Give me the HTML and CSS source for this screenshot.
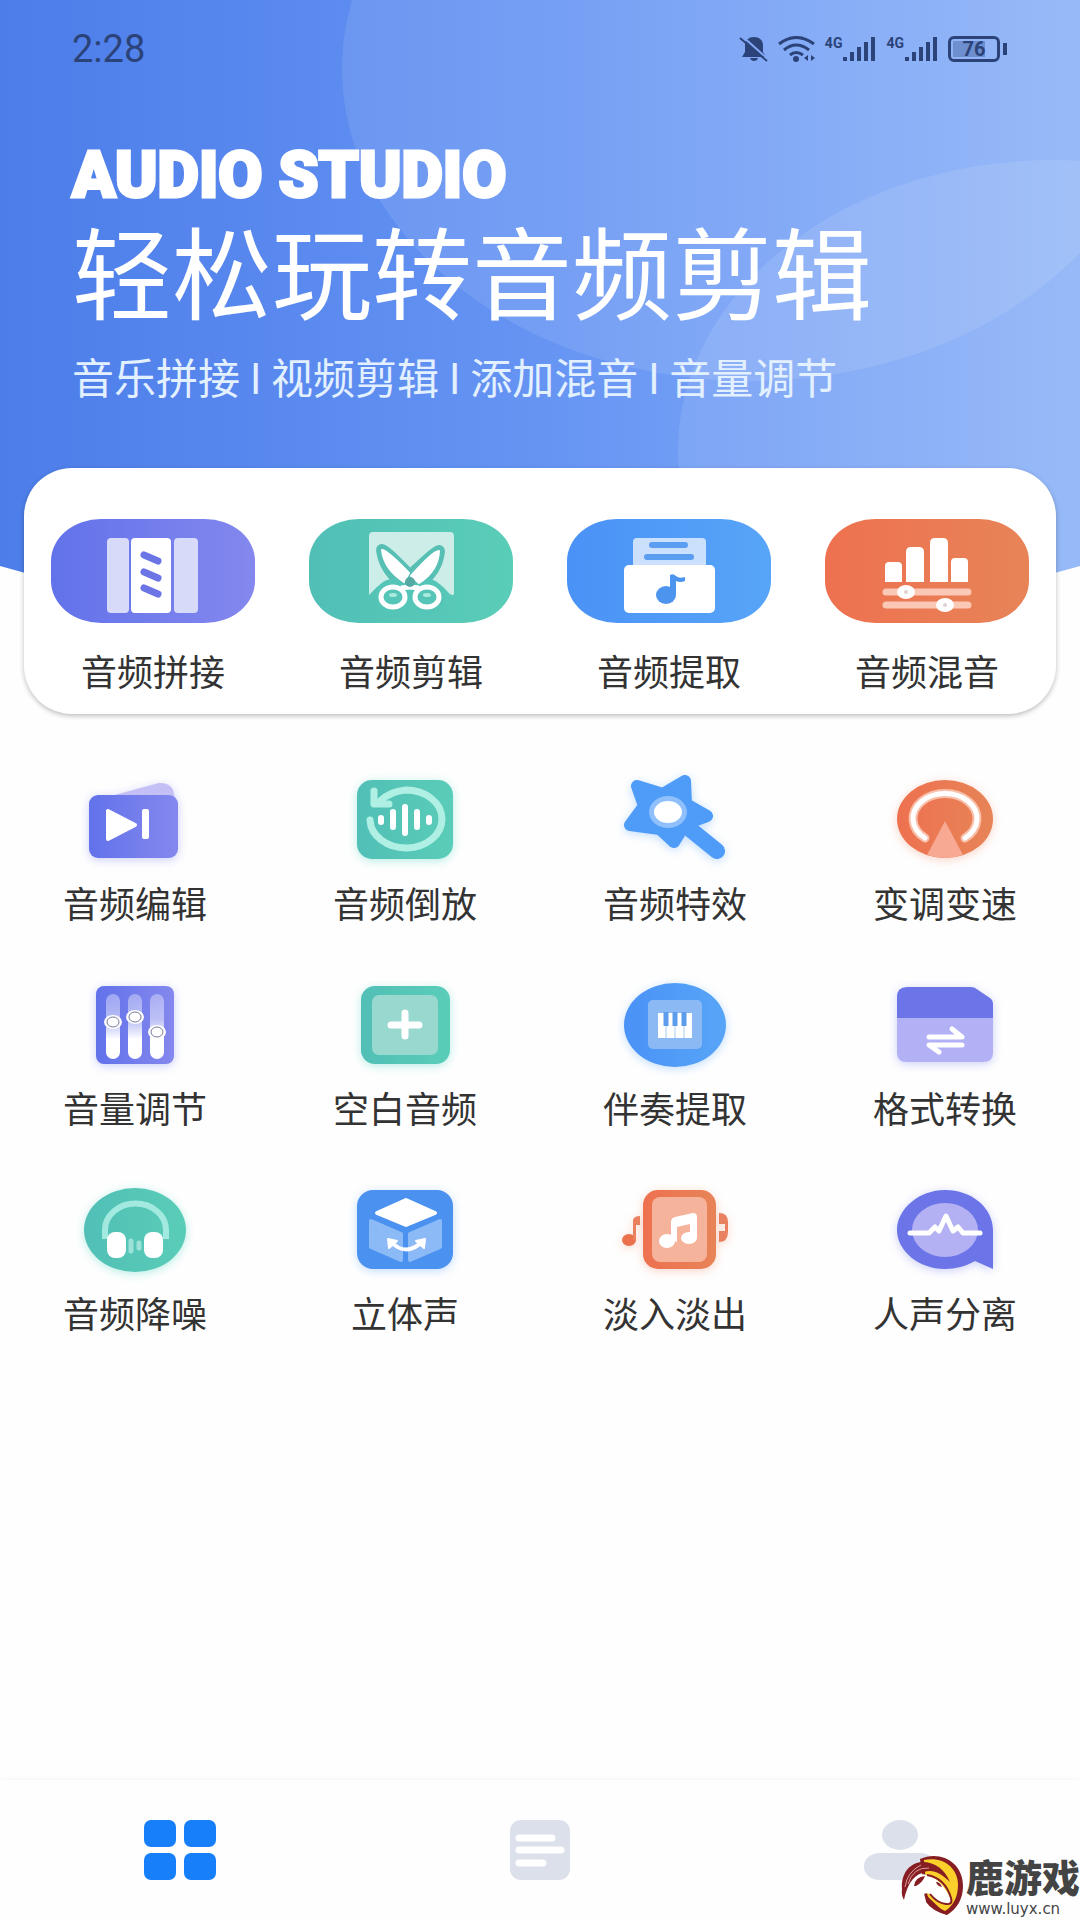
FILE: index.html
```html
<!DOCTYPE html>
<html lang="zh-CN">
<head>
  <meta charset="UTF-8" />
  <meta name="viewport" content="width=device-width, initial-scale=1.0"/>
  <title>Audio Studio</title>
  <link rel="stylesheet" href="styles.css">
</head>
<body>

<!-- shared gradients -->
<svg class="defs" width="0" height="0" aria-hidden="true">
  <defs>
    <linearGradient id="purple"><stop offset="0" stop-color="#6272ea"/><stop offset="1" stop-color="#8488ee"/></linearGradient>
    <linearGradient id="green"><stop offset="0" stop-color="#51bfb6"/><stop offset="1" stop-color="#5acdb8"/></linearGradient>
    <linearGradient id="blue"><stop offset="0" stop-color="#4a92f6"/><stop offset="1" stop-color="#57a5f8"/></linearGradient>
    <linearGradient id="orange"><stop offset="0" stop-color="#ee7150"/><stop offset="1" stop-color="#e78457"/></linearGradient>
    <linearGradient id="sky"><stop offset="0" stop-color="#4c7de9"/><stop offset="0.5" stop-color="#6594f3"/><stop offset="1" stop-color="#8cb2f8"/></linearGradient>
    <linearGradient id="track" x2="0" y2="1"><stop offset="0" stop-color="#fff" stop-opacity="0.35"/><stop offset="0.4" stop-color="#fff" stop-opacity="0.5"/><stop offset="0.7" stop-color="#fff"/></linearGradient>
    <clipPath id="heroShape"><path d="M0 0H1080V566Q540 720 0 566Z"/></clipPath>
  </defs>
</svg>

<div class="page">
  <header class="hero">
    <svg class="hero-bg" viewBox="0 0 1080 650" preserveAspectRatio="none" aria-hidden="true">
      <g clip-path="url(#heroShape)">
        <rect width="1080" height="650" fill="url(#sky)"/>
        <ellipse cx="750" cy="69" rx="408" ry="312" fill="#fff" fill-opacity="0.1"/>
        <ellipse cx="1054" cy="450" rx="376" ry="290" fill="#fff" fill-opacity="0.1"/>
      </g>
    </svg>

    <div class="status-bar">
      <span class="time">2:28</span>
      <div class="status-icons">
        <svg width="30" height="26" viewBox="0 0 30 26">
          <path d="M15 1C20 1 24 4 24 9V16L27 21H3L6 16V9C6 4 10 1 15 1Z" fill="currentColor"/>
          <path d="M11 22H19Q18 25 15 25T11 22Z" fill="currentColor"/>
          <path d="M3 0L30 24" stroke="#83a9f6" stroke-width="2"/>
          <path d="M1 2L28 25" stroke="currentColor" stroke-width="2"/>
        </svg>
        <svg width="38" height="26" viewBox="0 0 38 26" fill="none" stroke="currentColor" stroke-width="3">
          <path d="M1 8Q18 -5 36 8M6 14Q18 4 31 14M12 19Q18 14 25 19"/>
          <circle cx="18" cy="23" r="3" fill="currentColor" stroke="none"/>
          <path d="M30 19V25L26 22ZM33 19V25L37 22Z" fill="currentColor" stroke="none"/>
        </svg>
        <span class="net">4G</span>
        <svg class="bars" width="34" height="26" viewBox="0 0 34 26" fill="currentColor">
          <path d="M0 21H4V25H0ZM7 16H11V25H7ZM14 11H18V25H14ZM21 6H25V25H21ZM28 1H32V25H28Z"/>
        </svg>
        <span class="net">4G</span>
        <svg class="bars" width="34" height="26" viewBox="0 0 34 26" fill="currentColor">
          <path d="M0 21H4V25H0ZM7 16H11V25H7ZM14 11H18V25H14ZM21 6H25V25H21ZM28 1H32V25H28Z"/>
        </svg>
        <span class="battery">76</span>
      </div>
    </div>

    <h1>AUDIO STUDIO</h1>
    <h2>轻松玩转音频剪辑</h2>
    <p>音乐拼接 I 视频剪辑 I 添加混音 I 音量调节</p>
  </header>

  <!-- MAIN TOOLS -->
  <section class="card">
    <button type="button" class="tool">
      <svg viewBox="0 0 204 104">
        <rect width="204" height="104" rx="50" ry="42" fill="url(#purple)"/>
        <rect x="56" y="19" width="22" height="75" rx="4" fill="#d7daf9"/>
        <rect x="123" y="19" width="24" height="75" rx="4" fill="#d7daf9"/>
        <rect x="80" y="19" width="40" height="75" rx="4" fill="#fff"/>
        <path d="M93 36L107 42M93 53L107 59M93 69L107 75" stroke="#6c75e6" stroke-width="7" stroke-linecap="round"/>
      </svg>
      <span>音频拼接</span>
    </button>
    <button type="button" class="tool">
      <svg viewBox="0 0 204 104">
        <rect width="204" height="104" rx="50" ry="42" fill="url(#green)"/>
        <path d="M60 17Q60 13 64 13H141Q145 13 145 17V75Q143 78 138 72Q131 62 118 64H86Q71 62 64 72L60 76Z" fill="#cdeee8"/>
        <path d="M73 31Q76 31 101 57L97 66Q76 53 73 31ZM130 32Q127 32 101 57L108 66Q128 53 130 32Z" fill="#fff" stroke="#58bfb4" stroke-width="12" stroke-linejoin="round"/>
        <circle cx="84" cy="78" r="18" fill="#55c5b8"/>
        <circle cx="118" cy="78" r="18" fill="#55c5b8"/>
        <path d="M73 31Q79 32 100 54L95 63Q75 50 73 31ZM130 32Q124 32 102 57L110 64Q129 52 130 32Z" fill="#fff" stroke="#fff" stroke-width="2" stroke-linejoin="round"/>
        <path d="M92 69L101 68L110 69" fill="none" stroke="#fff" stroke-width="5"/>
        <circle cx="101" cy="63" r="5" fill="#55aaa4"/>
        <g fill="none" stroke="#fff" stroke-width="5">
          <ellipse cx="84" cy="78" rx="12" ry="10"/>
          <ellipse cx="118" cy="78" rx="12" ry="10"/>
        </g>
        <ellipse cx="84" cy="76" rx="4" ry="2" fill="#a9eadf"/>
        <ellipse cx="118" cy="76" rx="4" ry="2" fill="#a9eadf"/>
      </svg>
      <span>音频剪辑</span>
    </button>
    <button type="button" class="tool">
      <svg viewBox="0 0 204 104">
        <rect width="204" height="104" rx="50" ry="42" fill="url(#blue)"/>
        <rect x="66" y="19" width="73" height="35" rx="4" fill="#cbe0fc"/>
        <path d="M85 26H118M80 38H124" stroke="#5b9df0" stroke-width="6" stroke-linecap="round"/>
        <rect x="57" y="46" width="91" height="48" rx="5" fill="#fff"/>
        <ellipse cx="99" cy="76" rx="10" ry="9" fill="#4d94ee"/>
        <path d="M103 76V56Q106 54 109 57Q112 60 118 58V62Q113 64 109 62V76Z" fill="#4d94ee"/>
      </svg>
      <span>音频提取</span>
    </button>
    <button type="button" class="tool">
      <svg viewBox="0 0 204 104">
        <rect width="204" height="104" rx="50" ry="42" fill="url(#orange)"/>
        <path d="M60 63V47Q60 43 64 43H73Q77 43 77 47V63ZM81 63V33Q81 28 86 28H94Q99 28 99 33V63ZM105 63V24Q105 19 110 19H118Q123 19 123 24V63ZM126 63V43Q126 39 130 39H139Q143 39 143 43V63Z" fill="#fff"/>
        <path d="M61 73H143M61 86H143" stroke="#fac8b5" stroke-width="7" stroke-linecap="round"/>
        <ellipse cx="81" cy="73" rx="9" ry="7" fill="#fff"/>
        <ellipse cx="120" cy="86" rx="9" ry="7" fill="#fff"/>
        <circle cx="81" cy="73" r="2" fill="#ddd3d3"/>
        <circle cx="120" cy="86" r="2" fill="#ddd3d3"/>
      </svg>
      <span>音频混音</span>
    </button>
  </section>

  <!-- OTHER FEATURES -->
  <main class="features">
    <button type="button" class="feature glow-purple">
      <svg viewBox="0 0 120 100">
        <path d="M36 26L84 13Q94 12 98 20L101 34H36Z" fill="#c4bff4"/>
        <rect x="14" y="25" width="89" height="63" rx="9" fill="url(#purple)"/>
        <path d="M33 41V69L60 55Z" fill="#fff" stroke="#fff" stroke-width="4" stroke-linejoin="round"/>
        <rect x="67" y="39" width="7" height="30" rx="2" fill="#fff"/>
      </svg>
      <span>音频编辑</span>
    </button>
    <button type="button" class="feature glow-green">
      <svg viewBox="0 0 120 100">
        <rect x="12" y="10" width="96" height="79" rx="15" fill="url(#green)"/>
        <path d="M25 50A36 29 0 1 0 61 20Q46 21 35 31" fill="none" stroke="#b0f0e4" stroke-width="7" stroke-linecap="round"/>
        <path d="M29 21V34H44" fill="none" stroke="#b0f0e4" stroke-width="7" stroke-linejoin="round" stroke-linecap="round"/>
        <path d="M36 48V52M48 42V57M60 37V63M72 42V57M84 48V52" stroke="#fff" stroke-width="6" stroke-linecap="round"/>
      </svg>
      <span>音频倒放</span>
    </button>
    <button type="button" class="feature glow-blue">
      <svg viewBox="0 0 120 100">
        <path d="M76 60L102 81" stroke="#4f9cf8" stroke-width="16" stroke-linecap="round"/>
        <path d="M22 16L48 24L70 11L71 34L92 46L70 54L59 72L45 59L15 55L29 36Z" fill="#4f9cf8" stroke="#4f9cf8" stroke-width="12" stroke-linejoin="round"/>
        <ellipse cx="53" cy="42" rx="19" ry="16" fill="#8fc0fc"/>
        <ellipse cx="53" cy="42" rx="14" ry="11" fill="#fff"/>
      </svg>
      <span>音频特效</span>
    </button>
    <button type="button" class="feature glow-orange">
      <svg viewBox="0 0 120 100">
        <ellipse cx="60" cy="49" rx="48" ry="39" fill="url(#orange)"/>
        <path d="M40 68A32 25 0 1 1 80 68" fill="none" stroke="#f8c0aa" stroke-width="9" stroke-linecap="round"/>
        <path d="M40 68A32 25 0 1 1 80 68" fill="none" stroke="#fff" stroke-width="5" stroke-linecap="round"/>
        <path d="M60 51L78 85Q60 91 42 85Z" fill="#f8a993"/>
      </svg>
      <span>变调变速</span>
    </button>

    <button type="button" class="feature glow-purple">
      <svg viewBox="0 0 120 100">
        <rect x="21" y="11" width="78" height="78" rx="8" fill="url(#purple)"/>
        <rect x="31" y="19" width="14" height="65" rx="7" fill="url(#track)"/>
        <rect x="53" y="19" width="14" height="65" rx="7" fill="url(#track)"/>
        <rect x="75" y="19" width="14" height="65" rx="7" fill="url(#track)"/>
        <g fill="#fff">
          <ellipse cx="38" cy="47" rx="9" ry="7"/>
          <ellipse cx="60" cy="42" rx="9" ry="7"/>
          <ellipse cx="82" cy="57" rx="9" ry="7"/>
        </g>
        <g fill="none" stroke="#777a9c">
          <ellipse cx="38" cy="47" rx="6" ry="5"/>
          <ellipse cx="60" cy="42" rx="6" ry="5"/>
          <ellipse cx="82" cy="57" rx="6" ry="5"/>
        </g>
      </svg>
      <span>音量调节</span>
    </button>
    <button type="button" class="feature glow-green">
      <svg viewBox="0 0 120 100">
        <rect x="16" y="11" width="89" height="78" rx="14" fill="url(#green)"/>
        <rect x="27" y="20" width="66" height="60" rx="7" fill="#98d8cf"/>
        <path d="M46 50H74M60 38V61" stroke="#fff" stroke-width="7" stroke-linecap="round"/>
      </svg>
      <span>空白音频</span>
    </button>
    <button type="button" class="feature glow-blue">
      <svg viewBox="0 0 120 100">
        <ellipse cx="60" cy="50" rx="51" ry="42" fill="url(#blue)"/>
        <rect x="33" y="25" width="54" height="49" rx="5" fill="#8ab9f4"/>
        <rect x="43" y="38" width="34" height="25" fill="#fff"/>
        <path d="M51 37V51M60 37V51M69 37V51" stroke="#5c9cec" stroke-width="5"/>
        <path d="M51 51V63M60 51V63M69 51V63" stroke="#a9cbf5" stroke-width="1"/>
      </svg>
      <span>伴奏提取</span>
    </button>
    <button type="button" class="feature glow-purple">
      <svg viewBox="0 0 120 100">
        <path d="M12 50V22Q12 12 22 12H86Q90 12 93 15L105 23Q108 25 108 29V50Z" fill="#6b75e8"/>
        <path d="M12 43H108V78Q108 87 98 87H22Q12 87 12 78Z" fill="#b3b1f5"/>
        <path d="M44 62H77L67 54M77 70H44L54 77" fill="none" stroke="#fff" stroke-width="5" stroke-linecap="round" stroke-linejoin="round"/>
      </svg>
      <span>格式转换</span>
    </button>

    <button type="button" class="feature glow-green">
      <svg viewBox="0 0 120 100">
        <ellipse cx="60" cy="50" rx="51" ry="42" fill="url(#green)"/>
        <path d="M30 59V50A30 26 0 0 1 91 50V59" fill="none" stroke="#a2eadf" stroke-width="6"/>
        <rect x="32" y="52" width="19" height="26" rx="8" fill="#fff"/>
        <rect x="69" y="52" width="19" height="26" rx="8" fill="#fff"/>
        <path d="M56 61V71M64 63V68" stroke="#9ce2da" stroke-width="5" stroke-linecap="round"/>
      </svg>
      <span>音频降噪</span>
    </button>
    <button type="button" class="feature glow-blue">
      <svg viewBox="0 0 120 100">
        <rect x="12" y="10" width="96" height="79" rx="16" fill="#4b92f0"/>
        <path d="M26 41L56 54V80L26 67ZM95 41L65 54V80L95 67Z" fill="#8cbaf6" stroke="#8cbaf6" stroke-width="4" stroke-linejoin="round"/>
        <path d="M61 20L90 33L61 45L32 33Z" fill="#fff" stroke="#fff" stroke-width="4" stroke-linejoin="round"/>
        <path d="M45 61Q61 78 78 61" fill="none" stroke="#fff" stroke-width="4"/>
        <path d="M43 59L52 61L44 68ZM80 59L71 61L79 68Z" fill="#fff" stroke="#fff" stroke-width="2" stroke-linejoin="round"/>
      </svg>
      <span>立体声</span>
    </button>
    <button type="button" class="feature glow-orange">
      <svg viewBox="0 0 120 100">
        <ellipse cx="14" cy="60" rx="7" ry="6" fill="#ea714b"/>
        <path d="M18 60V40Q19 36 25 36V45H21V60Z" fill="#e9805f"/>
        <path d="M104 33Q113 33 113 42V52Q113 62 104 62V51H110V44H104Z" fill="#e9805f"/>
        <rect x="28" y="10" width="73" height="79" rx="15" fill="url(#orange)"/>
        <rect x="37" y="17" width="55" height="65" rx="8" fill="#f5b39c"/>
        <path d="M56 60V42Q56 38 60 37L78 33Q82 33 82 37V58H75V44L62 47V62Z" fill="#fff"/>
        <ellipse cx="52" cy="61" rx="8" ry="7" fill="#fff"/>
        <ellipse cx="74" cy="58" rx="8" ry="6" fill="#fff"/>
      </svg>
      <span>淡入淡出</span>
    </button>
    <button type="button" class="feature glow-purple">
      <svg viewBox="0 0 120 100">
        <path d="M60 10C87 10 108 28 108 50V89L90 81Q76 89 60 89C34 89 12 71 12 50S34 10 60 10Z" fill="#6b75e8"/>
        <ellipse cx="60" cy="50" rx="33" ry="27" fill="#b3b1f3"/>
        <path d="M25 53H44L50 47L54 51L61 36L68 51L73 47L78 53H95" fill="none" stroke="#fff" stroke-width="5" stroke-linecap="round" stroke-linejoin="round"/>
      </svg>
      <span>人声分离</span>
    </button>
  </main>

  <nav class="tab-bar">
    <button type="button" class="active" aria-label="首页">
      <svg width="72" height="60" viewBox="0 0 72 60" fill="currentColor">
        <rect width="32" height="27" rx="7"/>
        <rect x="40" width="32" height="27" rx="7"/>
        <rect y="33" width="32" height="27" rx="7"/>
        <rect x="40" y="33" width="32" height="27" rx="7"/>
      </svg>
    </button>
    <button type="button" aria-label="作品">
      <svg width="60" height="60" viewBox="0 0 60 60">
        <rect width="60" height="60" rx="11" fill="currentColor"/>
        <path d="M9 18H42M9 30H51M9 43H33" stroke="#fff" stroke-width="7" stroke-linecap="round"/>
      </svg>
    </button>
    <button type="button" aria-label="我的">
      <svg width="72" height="60" viewBox="0 0 72 60" fill="currentColor">
        <ellipse cx="36" cy="15" rx="18" ry="15"/>
        <rect y="33" width="72" height="27" rx="16" ry="13"/>
      </svg>
    </button>

    <div class="watermark">
      <svg width="66" height="64" viewBox="0 0 66 64">
        <path d="M20 5C40 -4 63 8 63 32C63 45 57 55 47 61C35 56 24 50 24 37Z" fill="#861d22"/>
        <path d="M24 6C42 2 58 13 58 31C58 43 53 52 45 57C34 52 28 47 27 39Z" fill="#fbd02b"/>
        <path d="M47 61L25 40L26 48Q32 57 47 61Z" fill="#861d22"/>
        <path d="M4 41C4 26 15 16 30 22C40 26 45 34 51 45Q52 50 46 50Q36 48 30 40Q25 38 20 42Q22 34 17 33Q8 38 5 48Z" fill="#fff"/>
        <path d="M2 35C1 20 9 9 22 8C36 8 45 16 50 28C40 18 32 15 24 18C13 22 8 29 4 46Q1 41 2 35Z" fill="#861d22"/>
        <path d="M8 30Q13 13 29 14M5 33Q7 18 21 11" fill="none" stroke="#d9a0a0" stroke-width="1"/>
        <path d="M14 32Q15 23 25 22Q23 28 16 32M36 28Q40 28 42 33Q37 32 36 28Z" fill="#861d22"/>
        <path d="M27 21Q45 24 51 44Q53 51 46 50Q37 49 30 40" fill="none" stroke="#861d22" stroke-width="2"/>
      </svg>
      <div class="watermark-text">
        <strong>鹿游戏</strong>
        <small>www.luyx.cn</small>
      </div>
    </div>
  </nav>
</div>

</body>
</html>
```
FILE: styles.css
```css
* {
  box-sizing: border-box;
}

body {
  margin: 0;
  background: #fefefe;
  color: #333;
  font-family: 'Noto Sans CJK SC', sans-serif;
}

button {
  padding: 0;
  border: none;
  background: none;
  color: inherit;
  font: inherit;
}

svg {
  display: block;
}

.defs {
  position: absolute;
}

.page {
  display: flex;
  flex-direction: column;
  min-height: 100vh;
}

/* hero */
.hero {
  position: relative;
  padding: 28px 72px 62px;
  color: #fff;
}

.hero-bg {
  position: absolute;
  top: 0;
  left: 0;
  z-index: -1;
  width: 100%;
  height: 650px;
}

.status-bar {
  display: flex;
  align-items: center;
  justify-content: space-between;
  height: 42px;
  color: #2b4379;
  font-family: Roboto, sans-serif;
}

.time {
  font-size: 38px;
}

.status-icons {
  display: flex;
  align-items: center;
  gap: 9px;
}

.net {
  align-self: flex-start;
  font-size: 14px;
  font-weight: 700;
  line-height: 14px;
}

.bars {
  margin-left: -8px;
}

.battery {
  position: relative;
  width: 52px;
  height: 26px;
  margin-right: 8px;
  border: 3px solid;
  border-radius: 6px;
  background: linear-gradient(to right, #6d8fcf 76%, transparent 76%) content-box;
  padding: 2px;
  font-size: 20px;
  font-weight: 700;
  line-height: 16px;
  text-align: center;
}

.battery::after {
  content: '';
  position: absolute;
  top: 4px;
  right: -10px;
  width: 4px;
  height: 12px;
  background: currentColor;
}

.hero h1 {
  margin: 66px 0 0;
  font-family: Roboto, sans-serif;
  font-size: 64px;
  font-weight: 900;
  line-height: 80px;
  -webkit-text-stroke: 3px #fff;
}

.hero h2 {
  margin: 0;
  font-size: 100px;
  font-weight: 400;
  line-height: 106px;
}

.hero p {
  margin: 24px 0 0;
  color: #e3f0ff;
  font-size: 42px;
  font-weight: 400;
  line-height: 60px;
}

/* main tools */
.card {
  display: grid;
  grid-template-columns: repeat(4, 1fr);
  margin: 0 24px;
  padding: 51px 0 24px;
  border-radius: 48px;
  background: #fff;
  box-shadow: 0 2px 5px rgba(0, 0, 0, 0.25);
}

.tool,
.feature {
  display: flex;
  flex-direction: column;
  align-items: center;
  font-size: 36px;
  line-height: 40px;
}

.tool {
  gap: 27px;
}

.tool svg {
  width: 204px;
  height: 104px;
}

/* other features */
.features {
  display: grid;
  flex: 1;
  grid-template-columns: repeat(4, 1fr);
  align-content: start;
  row-gap: 53px;
  padding: 56px 0 40px;
}

.feature {
  gap: 12px;
}

.feature svg {
  width: 120px;
  height: 100px;
}

.glow-purple svg {
  filter: drop-shadow(0 2px 5px rgba(110, 120, 240, 0.35));
}

.glow-green svg {
  filter: drop-shadow(0 2px 5px rgba(80, 215, 195, 0.4));
}

.glow-blue svg {
  filter: drop-shadow(0 2px 5px rgba(80, 160, 250, 0.35));
}

.glow-orange svg {
  filter: drop-shadow(0 2px 5px rgba(240, 120, 80, 0.3));
}

/* bottom tabs */
.tab-bar {
  position: relative;
  display: grid;
  grid-template-columns: repeat(3, 1fr);
  height: 140px;
  background: #fefefe;
  box-shadow: 0 0 5px rgba(0, 0, 0, 0.06);
}

.tab-bar button {
  display: flex;
  align-items: center;
  justify-content: center;
  color: #dce0eb;
}

.tab-bar .active {
  color: #187ffa;
}

.watermark {
  position: absolute;
  right: 0;
  bottom: 2px;
  display: flex;
  align-items: center;
  color: #444;
}

.watermark-text {
  display: grid;
  gap: 4px;
}

.watermark strong {
  font-size: 38px;
  font-weight: 900;
  line-height: 42px;
}

.watermark small {
  font-family: 'DejaVu Sans', sans-serif;
  font-size: 15px;
  line-height: 16px;
}
```
